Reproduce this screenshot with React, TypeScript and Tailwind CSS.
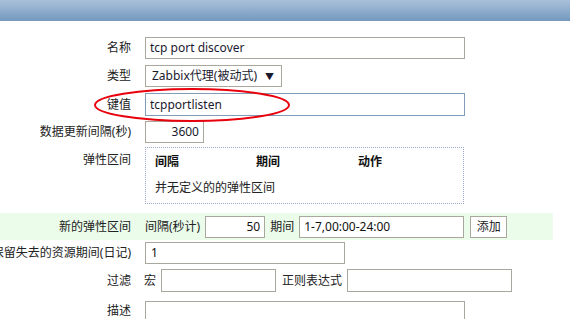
import React from "react";

const font = { fontFamily: '"Noto Sans", "Noto Sans CJK SC", sans-serif' };

function Label({ children, className = "" }: { children: React.ReactNode; className?: string }) {
  return (
    <div className={"w-[131px] shrink-0 flex justify-end whitespace-nowrap text-[#222] " + className}>
      <span>{children}</span>
    </div>
  );
}

export default function App() {
  return (
    <div
      className="relative w-[570px] h-[319px] overflow-hidden bg-white text-[12px] leading-[16px] text-[#111]"
      style={font}
    >
      <div className="h-[21px] bg-linear-to-b from-[#aac0d9] to-[#7499bf]" />

      {/* 名称 */}
      <div className="mt-[16px] flex items-center h-[22px]">
        <Label>名称</Label>
        <div className="ml-[14px] w-[320px] h-[22px] border border-[#aaa79c] px-[4px] flex items-center text-[#1a1a2e]">
          tcp port discover
        </div>
      </div>

      {/* 类型 */}
      <div className="mt-[6px] flex items-center h-[22px]">
        <Label>类型</Label>
        <div className="ml-[14px] w-[137px] h-[22px] border border-[#aaa79c] pl-[6px] flex items-center text-[#1a1a2e]">
          <span>Zabbix代理(被动式)</span>
          <span className="ml-[8px] text-[9px] leading-none">▼</span>
        </div>
      </div>

      {/* 键值 */}
      <div className="mt-[6px] flex items-center h-[23px]">
        <Label>键值</Label>
        <div className="ml-[14px] w-[320px] h-[23px] border border-[#7f9db9] px-[4px] flex items-center text-[#1a1a2e]">
          tcpportlisten
        </div>
      </div>

      {/* 数据更新间隔 */}
      <div className="mt-[5px] flex items-center h-[22px]">
        <Label>数据更新间隔(秒)</Label>
        <div className="ml-[14px] w-[59px] h-[22px] border border-[#aaa79c] px-[4px] flex items-center justify-end text-[#1a1a2e]">
          3600
        </div>
      </div>

      {/* 弹性区间 */}
      <div className="mt-[4px] flex items-start">
        <Label className="mt-[5px]">弹性区间</Label>
        <div className="ml-[14px] w-[319px] h-[57px] border border-dotted border-[#9aa6cc] pl-[9px] pt-[6px]">
          <div className="flex font-bold text-[#111]">
            <span className="w-[101px]">间隔</span>
            <span className="w-[102px]">期间</span>
            <span>动作</span>
          </div>
          <div className="mt-[10px] text-[#222]">并无定义的的弹性区间</div>
        </div>
      </div>

      {/* 新的弹性区间 */}
      <div className="mt-[9px] w-[553px] h-[27px] bg-[#ebfcea] flex items-center">
        <Label>新的弹性区间</Label>
        <span className="ml-[14px] text-[#222]">间隔(秒计)</span>
        <div className="ml-[5px] w-[60px] h-[22px] bg-white border border-[#aaa79c] px-[4px] flex items-center justify-end">
          50
        </div>
        <span className="ml-[5px] text-[#222]">期间</span>
        <div className="ml-[5px] w-[165px] h-[22px] bg-white border border-[#aaa79c] px-[4px] flex items-center">
          1-7,00:00-24:00
        </div>
        <div className="ml-[6px] w-[37px] h-[22px] bg-white border border-[#aaa79c] flex items-center justify-center text-[#222]">
          添加
        </div>
      </div>

      {/* 保留失去的资源期间 */}
      <div className="mt-[2px] flex items-center h-[22px]">
        <Label>保留失去的资源期间(日记)</Label>
        <div className="ml-[14px] w-[200px] h-[22px] border border-[#aaa79c] px-[5px] flex items-center">
          1
        </div>
      </div>

      {/* 过滤 */}
      <div className="mt-[5px] flex items-center h-[23px]">
        <Label>过滤</Label>
        <span className="ml-[13px] text-[#222]">宏</span>
        <div className="ml-[5px] w-[115px] h-[23px] border border-[#aaa79c]" />
        <span className="ml-[6px] text-[#222]">正则表达式</span>
        <div className="ml-[5px] w-[165px] h-[23px] border border-[#aaa79c]" />
      </div>

      {/* 描述 */}
      <div className="mt-[9px] flex items-start">
        <Label className="mt-[2px]">描述</Label>
        <div className="ml-[14px] w-[320px] h-[40px] border border-[#aaa79c]" />
      </div>

      <svg
        className="absolute left-[93px] top-[87px] pointer-events-none"
        width="200"
        height="37"
        viewBox="0 0 200 37"
      >
        <ellipse cx="99" cy="18" rx="97" ry="16" fill="none" stroke="#e8000c" strokeWidth="2" />
      </svg>
    </div>
  );
}
